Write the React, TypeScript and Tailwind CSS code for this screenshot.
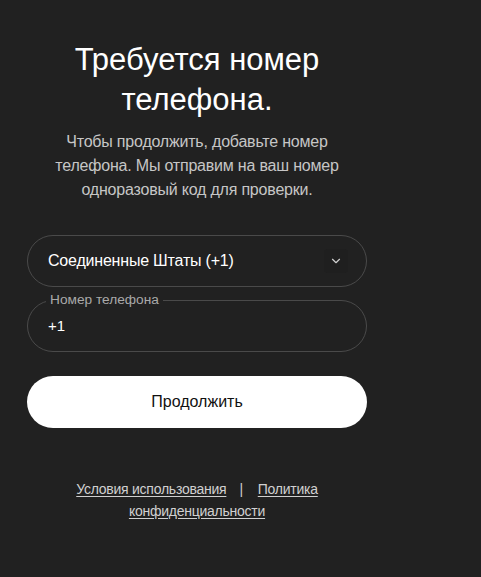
import { ChevronDown } from "lucide-react";

const App = () => {
  return (
    <div
      className="min-h-[577px] w-full bg-[#212121] text-white"
      style={{ fontFamily: '"Liberation Sans", Arial, sans-serif' }}
    >
      <div className="flex w-[340px] flex-col items-center pt-[40px] ml-[27px]">
        <h1 className="text-center text-[31px] leading-[40px] font-normal">
          Требуется номер
          <br />
          телефона.
        </h1>
        <p className="mt-[10px] text-center text-[16px] leading-[24px] text-[#c6c6c6] tracking-[-0.2px]">
          Чтобы продолжить, добавьте номер
          <br />
          телефона. Мы отправим на ваш номер
          <br />
          одноразовый код для проверки.
        </p>

        <div className="mt-[33px] flex h-[52px] w-full items-center justify-between rounded-full border border-[#4a4a4a] pl-[20px] pr-[18px]">
          <span className="text-[16px] tracking-[-0.2px]">Соединенные Штаты (+1)</span>
          <span className="flex h-[24px] w-[24px] items-center justify-center rounded-[4px] bg-[#1f1f1f]">
            <ChevronDown size={14} strokeWidth={2} className="text-[#cfcfcf]" />
          </span>
        </div>

        <div className="relative mt-[13px] flex h-[52px] w-full items-center rounded-full border border-[#4a4a4a] pl-[20px]">
          <span className="absolute -top-[9px] left-[18px] bg-[#212121] px-[4px] text-[13.7px] leading-[16px] text-[#a9a9a9]">
            Номер телефона
          </span>
          <span className="text-[15px]">+1</span>
        </div>

        <button className="mt-[24px] flex h-[52px] w-full items-center justify-center rounded-full bg-white text-[16px] text-[#111]">
          Продолжить
        </button>

        <div className="mt-[50px] text-center text-[14px] leading-[22px] text-[#d0d0d0] tracking-[-0.25px]">
          <a className="underline underline-offset-2">Условия использования</a>
          <span className="ml-[13px] mr-[15px]">|</span>
          <a className="underline underline-offset-2">Политика</a>
          <br />
          <a className="underline underline-offset-2">конфиденциальности</a>
        </div>
      </div>
    </div>
  );
};

export default App;
